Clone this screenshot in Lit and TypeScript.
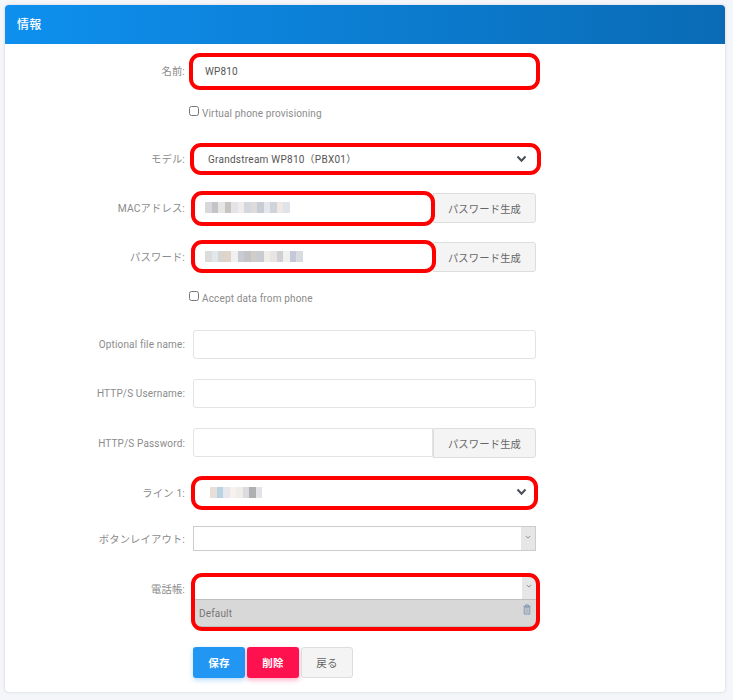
import { LitElement, html, css } from "lit";
import { customElement } from "lit/decorators.js";

const MAC = ["#d8d8dc","#c4c4c8","#e8e6e4","#c8c4c0","#e4e4e8","#f0ecec","#d4d8dc","#dcdcdc","#c8ccd4","#e4e8ec","#d0d4d8","#f0e8e4","#dfe3ea"];
const PW = ["#dcdcdc","#e0e8ec","#d8d4d0","#e0d4c8","#f0f0f0","#c8ccd0","#c4c4c8","#d0ccc8","#c8ccd0","#f0ece8","#e8e4e4","#d0d0d4","#f0f0f0","#c4c8d8","#d8dce0"];
const LINE = ["#e8e0d8","#b8d4e4","#e8e8ec","#f8f0ec","#f0ece8","#dcdce0","#b0b0b4","#e4e4e8"];

const chevron = html`<svg class="chev" viewBox="0 0 10 8" width="11" height="8"><path d="M1 1.5 5 5.8 9 1.5" fill="none" stroke="#4a4f57" stroke-width="2"/></svg>`;
const mini = html`<span class="arrow"><svg viewBox="0 0 8 5" width="6" height="4"><path d="M1 1 4 4 7 1" fill="none" stroke="#777" stroke-width="1"/></svg></span>`;

@customElement("app-root")
export class AppRoot extends LitElement {
  static styles = css`
    :host { display: block; height: 700px; background: #f5f6fa; box-sizing: border-box; padding: 5px 8px 0 5px;
      font-family: Roboto, "Noto Sans CJK JP", sans-serif; font-size: 10px; color: #666; letter-spacing: .15px; }
    * { box-sizing: border-box; }
    .card { height: 687px; background: #fff; border-radius: 4px; box-shadow: 0 0 3px rgba(60,70,100,.22); overflow: hidden; }
    .head { height: 39px; padding: 0 12px 2px; display: flex; align-items: center; color: #fff; font-size: 12px; font-weight: 500;
      background: linear-gradient(90deg, #0e90ef, #0a6bb5); }
    .body { padding-top: 13px; }
    .row { display: grid; grid-template-columns: 180px 343px; column-gap: 8px; align-items: center; }
    .row > label { text-align: right; color: #8b8b8b; white-space: nowrap; }
    .row > label.jp { font-size: 10.3px; }
    .row > label.up { padding-bottom: 2px; }
    .field { position: relative; display: flex; }
    .mark::after { content: ""; box-sizing: border-box; position: absolute; border: 4px solid #f00; border-radius: 11px; pointer-events: none; }
    .m-name::after { inset: -4px -4px -4px -4px; }
    .m-model::after { inset: -2px -5px -3px -3px; }
    .m-mac::after { inset: -2px auto -3px -2px; width: 244px; }
    .m-pw::after { inset: -2px auto -1px -2px; width: 245px; }
    .m-line::after { inset: -1px -2px -3px -2px; }
    .m-book::after { inset: -3px -4px -4px -2px; }
    input.text, .blur { flex: 1; min-width: 0; height: 29px; border: 1px solid #e3e3e3; border-radius: 3px; background: #fff; padding: 0 12px; font: inherit; color: #555; letter-spacing: .15px; outline: none; }
    input.bare { border: 0; }
    input.joined { border-radius: 3px 0 0 3px; }
    .blur { display: flex; align-items: center; border: 0; border-radius: 3px 0 0 3px; }
    .cell { width: 6.5px; height: 11px; }
    .btn { font: inherit; font-size: 10.3px; letter-spacing: .15px; background: #f4f4f4; border: 1px solid #ddd; color: #666; border-radius: 0 3px 3px 0; height: 30px; width: 103px; padding: 0; }
    .row > label.check { display: flex; align-items: center; gap: 3px; color: #8b8b8b; margin-left: -4px; text-align: left; }
    .check input { margin: 0; width: 10px; height: 10px; position: relative; top: -2px; }
    .select { flex: 1; display: flex; align-items: center; justify-content: space-between; height: 27px; padding: 0 9px 0 15px; background: #fff; }
    .select.tall { height: 30px; padding-left: 17px; }
    .select .txt { display: flex; align-items: center; color: #555; letter-spacing: .25px; }
    .r-name { height: 28px; }
    .r-c1 { margin-top: 21px; height: 14px; }
    .r-model { margin-top: 25px; height: 27px; }
    .r-mac { margin-top: 21px; height: 30px; }
    .r-pw { margin-top: 19px; height: 30px; }
    .r-c2 { margin-top: 19px; height: 14px; }
    .r-f { margin-top: 20px; height: 29px; }
    .r-c2 + .r-f { margin-top: 25px; }
    .r-line { margin-top: 20px; height: 30px; }
    .r-lay { margin-top: 19px; height: 25px; }
    .r-book { margin-top: 25px; align-items: start; }
    .r-book > label { margin-top: 5px; }
    .s2 { flex: 1; height: 25px; border: 1px solid #ccc; display: flex; justify-content: flex-end; background: #fff; }
    .arrow { width: 14px; background: #e6e6e6; display: flex; justify-content: center; padding-top: 8px; }
    .book { flex: 1; display: flex; flex-direction: column; height: 51px; }
    .book .top { height: 23px; display: flex; justify-content: flex-end; background: #fff; }
    .book .item { flex: 1; display: flex; justify-content: space-between; background: #d8d8d8; border: solid #bfbfbf; border-width: 1px 0; padding: 8px 4px 0 6px; border-radius: 0 0 3px 3px; color: #777; }
    .trash { margin-top: -4px; }
    .actions { margin: 20px 0 0 188px; display: flex; gap: 2px; }
    .act { font: inherit; font-size: 10.5px; letter-spacing: .15px; width: 52px; height: 31px; border-radius: 3px; border: 0; padding: 0; }
    .save { background: #2196f3; color: #fff; font-weight: 700; box-shadow: 0 2px 5px rgba(33,150,243,.35); }
    .del { background: #ff1150; color: #fff; font-weight: 700; box-shadow: 0 2px 5px rgba(255,17,80,.35); }
    .back { background: #f4f4f4; color: #666; border: 1px solid #ddd; }
  `;

  private mosaic(colors: string[]) {
    return colors.map((c) => html`<span class="cell" style="background:${c}"></span>`);
  }

  render() {
    return html`<div class="card">
      <div class="head">情報</div>
      <div class="body">
        <div class="row r-name"><label class="jp up">名前:</label><div class="field mark m-name"><input class="text bare" value="WP810" /></div></div>
        <div class="row r-c1"><span></span><label class="check"><input type="checkbox" />Virtual phone provisioning</label></div>
        <div class="row r-model"><label class="jp">モデル:</label><div class="field mark m-model"><div class="select"><span class="txt">Grandstream WP810（PBX01）</span>${chevron}</div></div></div>
        <div class="row r-mac"><label class="jp up">MACアドレス:</label><div class="field mark m-mac"><div class="blur">${this.mosaic(MAC)}</div><button class="btn">パスワード生成</button></div></div>
        <div class="row r-pw"><label class="jp up">パスワード:</label><div class="field mark m-pw"><div class="blur">${this.mosaic(PW)}</div><button class="btn">パスワード生成</button></div></div>
        <div class="row r-c2"><span></span><label class="check"><input type="checkbox" />Accept data from phone</label></div>
        <div class="row r-f"><label>Optional file name:</label><div class="field"><input class="text" /></div></div>
        <div class="row r-f"><label>HTTP/S Username:</label><div class="field"><input class="text" /></div></div>
        <div class="row r-f"><label>HTTP/S Password:</label><div class="field"><input class="text joined" /><button class="btn">パスワード生成</button></div></div>
        <div class="row r-line"><label class="jp">ライン 1:</label><div class="field mark m-line"><div class="select tall"><span class="txt">${this.mosaic(LINE)}</span>${chevron}</div></div></div>
        <div class="row r-lay"><label class="jp">ボタンレイアウト:</label><div class="field"><div class="s2">${mini}</div></div></div>
        <div class="row r-book"><label class="jp">電話帳:</label><div class="field mark m-book"><div class="book"><div class="top">${mini}</div><div class="item"><span>Default</span><svg class="trash" viewBox="0 0 10 12" width="10" height="11"><path d="M1 2.5h8M3.5 2.5V1h3v1.5M2 3.5h6V11H2z" fill="none" stroke="#7d93ad" stroke-width="1"/><path d="M4 4.5v5.5M6 4.5v5.5" stroke="#7d93ad" stroke-width=".8"/></svg></div></div></div></div>
        <div class="actions"><button class="act save">保存</button><button class="act del">削除</button><button class="act back">戻る</button></div>
      </div>
    </div>`;
  }
}
